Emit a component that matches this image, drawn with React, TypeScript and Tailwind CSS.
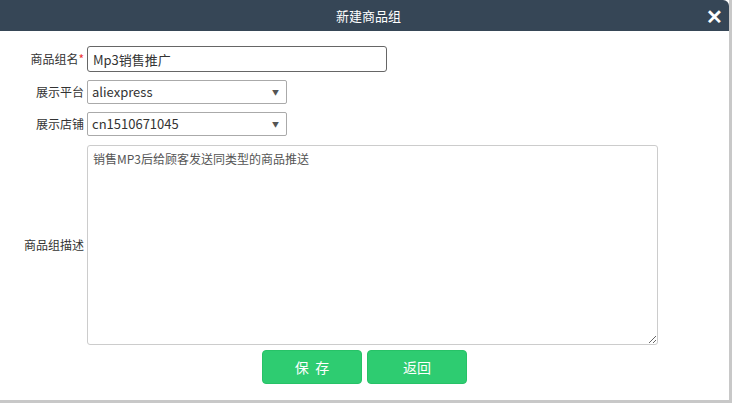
import { useState } from 'react'

const font = { fontFamily: '"Microsoft YaHei", "Noto Sans CJK SC", "Liberation Sans", sans-serif' }

function Label({ children, className = '' }: { children: React.ReactNode; className?: string }) {
  return (
    <div className={`w-[86px] shrink-0 pr-[2px] text-right text-[12px] text-[#333] ${className}`}>
      {children}
    </div>
  )
}

function FakeSelect({ value }: { value: string }) {
  return (
    <div className="relative flex h-[24px] w-[200px] items-center rounded-[2px] border border-[#aaa] bg-white pl-[4px] text-[13px] text-[#333]">
      {value}
      <span className="absolute right-[7px] top-[6px] text-[7px] text-[#555]">▼</span>
    </div>
  )
}

export default function App() {
  const [name, setName] = useState('Mp3销售推广')
  const [desc, setDesc] = useState('销售MP3后给顾客发送同类型的商品推送')

  return (
    <div className="h-[403px] w-[732px] bg-[#c8c8c8]" style={font}>
      <div className="flex h-[400px] w-[729px] flex-col bg-white">
        <div className="relative flex h-[31px] shrink-0 items-center justify-center rounded-tr-[6px] bg-[#364656] pl-[8px] text-[13px] text-white">
          新建商品组
          <span className="absolute right-[6px] top-[6px] text-[20px] font-bold leading-none">✕</span>
        </div>

        <div className="flex flex-col pt-[15px]">
          <div className="flex items-center">
            <Label>
              商品组名<span className="text-[#e33]">*</span>
            </Label>
            <input
              value={name}
              onChange={(e) => setName(e.target.value)}
              className="ml-[1px] h-[26px] w-[300px] rounded-[3px] border border-[#666] px-[5px] text-[13px] text-[#333] outline-none"
            />
          </div>

          <div className="mt-[8px] flex items-center">
            <Label>展示平台</Label>
            <div className="ml-[1px]">
              <FakeSelect value="aliexpress" />
            </div>
          </div>

          <div className="mt-[8px] flex items-center">
            <Label>展示店铺</Label>
            <div className="ml-[1px]">
              <FakeSelect value="cn1510671045" />
            </div>
          </div>

          <div className="mt-[9px] flex items-center">
            <Label>商品组描述</Label>
            <textarea
              value={desc}
              onChange={(e) => setDesc(e.target.value)}
              className="ml-[1px] h-[200px] w-[571px] resize rounded-[3px] border border-[#ccc] px-[5px] py-[4px] text-[12px] text-[#555] outline-none"
            />
          </div>

          <div className="mt-[5px] flex justify-center gap-[5px]">
            <button className="h-[34px] w-[100px] rounded-[4px] border border-[#27c267] bg-[#2ecc71] text-[14px] text-white">
              保&nbsp;&nbsp;存
            </button>
            <button className="h-[34px] w-[100px] rounded-[4px] border border-[#27c267] bg-[#2ecc71] text-[14px] text-white">
              返回
            </button>
          </div>
        </div>
      </div>
    </div>
  )
}
